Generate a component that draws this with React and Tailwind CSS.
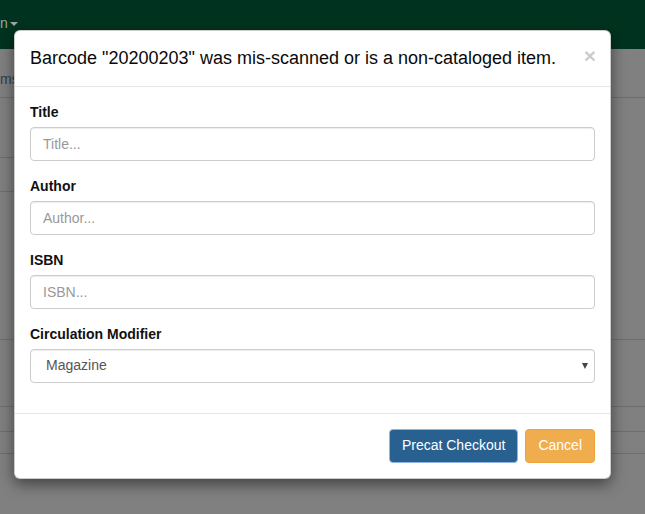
import React from 'react';

const font = { fontFamily: '"Liberation Sans", Arial, sans-serif' };

function Field({ label, placeholder }) {
  return (
    <div className="mb-[15px]">
      <label className="block mb-[5px] text-[14px] leading-[20px] font-bold text-[#111]">{label}</label>
      <input
        type="text"
        placeholder={placeholder}
        className="block w-full h-[34px] px-[12px] text-[14px] text-[#555] bg-white border border-[#ccc] rounded-[4px] shadow-[inset_0_1px_1px_rgba(0,0,0,0.075)] placeholder:text-[#999] outline-none"
      />
    </div>
  );
}

export default function App() {
  return (
    <div className="relative w-[645px] h-[514px] overflow-hidden bg-[#808080]" style={font}>
      {/* Dimmed page behind the modal */}
      <div className="h-[49px] bg-[#00331f] flex items-center">
        <span className="text-[14px] text-[#9aa8a2] leading-none -mt-[3px]">n</span>
        <span className="ml-[2px] -mt-[2px] w-0 h-0 border-l-[4px] border-r-[4px] border-t-[4px] border-l-transparent border-r-transparent border-t-[#9aa8a2]" />
      </div>
      <div className="h-[49px] border-b border-[#6e6e6e] flex items-center">
        <span className="text-[14px] text-[#2e3d4c] mt-[12px]">ms</span>
      </div>
      <div className="flex h-[94px]">
        <div className="w-1/2">
          <div className="h-[60px] border-b border-[#6e6e6e]" />
          <div className="h-[34px] border-b border-[#6e6e6e]" />
        </div>
        <div className="w-1/2" />
      </div>
      <div className="h-[148px] border-b border-[#6e6e6e]" />
      <div className="h-[67px] border-b border-[#6e6e6e]" />
      <div className="h-[25px] border-b border-[#6e6e6e]" />
      <div className="h-[22px] border-b border-[#6e6e6e]" />

      {/* Modal */}
      <div className="absolute left-[14px] top-[30px] w-[597px] bg-white rounded-[6px] border border-black/20 shadow-[0_5px_15px_rgba(0,0,0,0.5)]">
        <div className="flex items-start justify-between p-[15px] border-b border-[#e5e5e5]">
          <h4 className="text-[18px] leading-[24.7px] text-[#0a0a0a]">
            Barcode "20200203" was mis-scanned or is a non-cataloged item.
          </h4>
          <button className="text-[21px] leading-none font-bold text-black opacity-20 -mt-[1px] -mr-[1px]">×</button>
        </div>

        <div className="p-[15px]">
          <Field label="Title" placeholder="Title..." />
          <Field label="Author" placeholder="Author..." />
          <Field label="ISBN" placeholder="ISBN..." />
          <div className="mb-[15px]">
            <label className="block mb-[5px] text-[14px] leading-[20px] font-bold text-[#111]">Circulation Modifier</label>
            <div className="relative">
              <select
                defaultValue="magazine"
                className="block w-full h-[34px] pl-[15px] pr-[24px] text-[14px] text-[#555] bg-white border border-[#ccc] rounded-[4px] shadow-[inset_0_1px_1px_rgba(0,0,0,0.075)] appearance-none outline-none"
                style={font}
              >
                <option value="magazine">Magazine</option>
              </select>
              <span className="pointer-events-none absolute right-[7px] top-[14px] w-0 h-0 border-l-[3.5px] border-r-[3.5px] border-t-[6px] border-l-transparent border-r-transparent border-t-[#444]" />
            </div>
          </div>
        </div>

        <div className="flex justify-end gap-[7px] p-[15px] border-t border-[#e5e5e5]">
          <button className="h-[34px] px-[12px] text-[14px] text-white bg-[#286090] border border-[#8fb4e5] rounded-[4px]">
            Precat Checkout
          </button>
          <button className="h-[34px] px-[12px] text-[14px] text-white bg-[#f0ad4e] border border-[#eea236] rounded-[4px]">
            Cancel
          </button>
        </div>
      </div>
    </div>
  );
}
